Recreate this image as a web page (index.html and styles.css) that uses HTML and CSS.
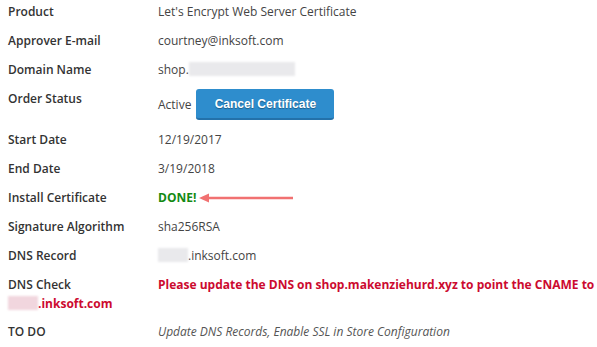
FILE: index.html
```html
<!DOCTYPE html>
<html>
<head>
<meta charset="utf-8">
<link rel="stylesheet" href="styles.css">
</head>
<body>
<div class="details">
  <div class="row"><span class="label">Product</span><span class="value">Let's Encrypt Web Server Certificate</span></div>
  <div class="row"><span class="label">Approver E-mail</span><span class="value">courtney@inksoft.com</span></div>
  <div class="row"><span class="label">Domain Name</span><span class="value">shop.<span class="blur blur-long"></span></span></div>
  <div class="row row-status"><span class="label">Order Status</span><span class="value">Active <button class="btn-cancel">Cancel Certificate</button></span></div>
  <div class="row"><span class="label">Start Date</span><span class="value">12/19/2017</span></div>
  <div class="row"><span class="label">End Date</span><span class="value">3/19/2018</span></div>
  <div class="row"><span class="label">Install Certificate</span><span class="value"><span class="done">DONE!</span><svg class="arrow" width="96" height="10" viewBox="0 0 96 10"><path d="M9 5 H95" stroke="#f17171" stroke-width="2.6" fill="none"/><path d="M1 5 L11 0.5 L11 9.5 Z" fill="#f17171"/></svg></span></div>
  <div class="row"><span class="label">Signature Algorithm</span><span class="value">sha256RSA</span></div>
  <div class="row"><span class="label">DNS Record</span><span class="value"><span class="blur blur-short"></span>.inksoft.com</span></div>
  <div class="row row-flow"><span class="label">DNS Check</span><span class="warn">Please update the DNS on shop.makenziehurd.xyz to point the CNAME to <span class="blur blur-short blur-pink"></span>.inksoft.com</span></div>
  <div class="row"><span class="label">TO DO</span><span class="value todo">Update DNS Records, Enable SSL in Store Configuration</span></div>
</div>
</body>
</html>
```
FILE: styles.css
```css
html, body {
  margin: 0;
  padding: 0;
  background: #fff;
}
body {
  font-family: "Open Sans", "DejaVu Sans", sans-serif;
  font-size: 12px;
  color: #444;
}
.details {
  padding: 2px 0 0 8px;
}
.row {
  display: flex;
  align-items: flex-start;
  line-height: 20px;
  margin-bottom: 9px;
}
.row-status {
  margin-bottom: 10px;
}
.label {
  flex: 0 0 150px;
  width: 150px;
  font-weight: 600;
  color: #333;
}
.value {
  color: #444;
}
.row-status .value {
  display: flex;
  align-items: center;
  gap: 5px;
  height: 31px;
}
.btn-cancel {
  font-family: "Liberation Sans", Arial, sans-serif;
  font-weight: bold;
  font-size: 12px;
  color: #fff;
  text-shadow: 0 1px 1px rgba(0,0,0,0.35);
  background: #2e8dcd;
  border: none;
  border-bottom: 2px solid #2371aa;
  border-radius: 3px;
  width: 138px;
  height: 31px;
  padding: 0;
  margin: 0;
}
.done {
  color: #138a13;
  font-weight: 700;
}
.arrow {
  margin-left: 2px;
  vertical-align: -1px;
}
.blur {
  display: inline-block;
  height: 14px;
  vertical-align: -2px;
  background: #e9e9ec;
  filter: blur(1px);
}
.blur-long {
  width: 106px;
}
.blur-short {
  width: 30px;
}
.blur-pink {
  background: #f1d6de;
}
.row-flow {
  display: block;
  line-height: 19px;
}
.row-flow .label {
  display: inline-block;
}
.warn {
  color: #cc0a2f;
  font-weight: 700;
}
.todo {
  font-style: italic;
  color: #555;
}
```
